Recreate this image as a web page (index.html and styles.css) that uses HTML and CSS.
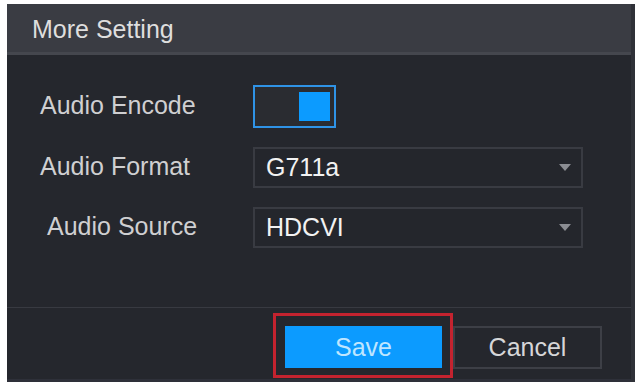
FILE: index.html
```html
<!DOCTYPE html>
<html>
<head>
<meta charset="utf-8">
<link rel="stylesheet" href="styles.css">
</head>
<body>
<div class="panel">
  <div class="titlebar">More Setting</div>
  <div class="content">
    <div class="row row-toggle">
      <div class="label">Audio Encode</div>
      <div class="toggle"><div class="knob"></div></div>
    </div>
    <div class="row">
      <div class="label">Audio Format</div>
      <div class="select"><span class="value">G711a</span><span class="arrow"></span></div>
    </div>
    <div class="row">
      <div class="label label-indent">Audio Source</div>
      <div class="select"><span class="value">HDCVI</span><span class="arrow"></span></div>
    </div>
  </div>
  <div class="footer">
    <div class="highlight"><button class="btn btn-save">Save</button></div>
    <button class="btn btn-cancel">Cancel</button>
  </div>
</div>
</body>
</html>
```

FILE: styles.css
```css
html, body {
  margin: 0;
  padding: 0;
  background: #ffffff;
}
body {
  width: 635px;
  height: 382px;
  overflow: hidden;
  font-family: "Liberation Sans", Arial, sans-serif;
}
.panel {
  margin: 4px 0 0 7px;
  height: 378px;
  background: #25272d;
  display: flex;
  flex-direction: column;
  box-sizing: border-box;
  border-right: 4px solid #2f3138;
}
.titlebar {
  height: 48px;
  flex: 0 0 48px;
  background: #3a3c43;
  color: #dedede;
  font-size: 25px;
  line-height: 50px;
  padding-left: 25px;
  border-bottom: 3px solid #45474e;
  box-sizing: content-box;
}
.content {
  flex: 0 0 auto;
  height: 222px;
  padding: 30px 0 0 33px;
  display: flex;
  flex-direction: column;
  gap: 19px;
  border-bottom: 1px solid #383a41;
}
.row {
  display: flex;
  align-items: center;
  height: 41px;
}
.row-toggle {
  height: 43px;
}
.label {
  width: 213px;
  flex: 0 0 213px;
  color: #cfcfd1;
  font-size: 25px;
  line-height: 1;
  margin-top: -2px;
}
.label-indent {
  padding-left: 7px;
  box-sizing: border-box;
}
.toggle {
  width: 83px;
  height: 43px;
  box-sizing: border-box;
  border: 2px solid #2f93e6;
  background: #2a2c31;
  padding: 5px 4px;
  display: flex;
  justify-content: flex-end;
}
.knob {
  width: 31px;
  height: 100%;
  background: #0c9bff;
}
.select {
  width: 330px;
  height: 41px;
  box-sizing: border-box;
  border: 2px solid #393b42;
  background: #24262c;
  display: flex;
  align-items: center;
  justify-content: space-between;
  padding: 0 10px 0 11px;
}
.value {
  color: #f2f2f2;
  font-size: 25px;
  line-height: 1;
}
.arrow {
  width: 0;
  height: 0;
  border-left: 6px solid transparent;
  border-right: 6px solid transparent;
  border-top: 7px solid #8b8d93;
}
.footer {
  flex: 1 1 auto;
  display: flex;
  justify-content: flex-end;
  align-items: flex-start;
  padding: 5px 29px 0 0;
  border-bottom: 3px solid #2e3039;
}
.highlight {
  border: 3px solid #c4232f;
  padding: 10px 8px 7px 9px;
  display: flex;
}
.btn {
  font-family: "Liberation Sans", Arial, sans-serif;
  font-size: 25px;
  margin: 0;
  box-sizing: border-box;
  height: 43px;
  cursor: pointer;
}
.btn-save {
  width: 157px;
  height: 42px;
  background: #0c9bff;
  color: #bfe6ff;
  border: none;
}
.btn-cancel {
  width: 149px;
  margin-top: 13px;
  background: #25272d;
  color: #d6d6d8;
  border: 2px solid #3d3f46;
}
```
